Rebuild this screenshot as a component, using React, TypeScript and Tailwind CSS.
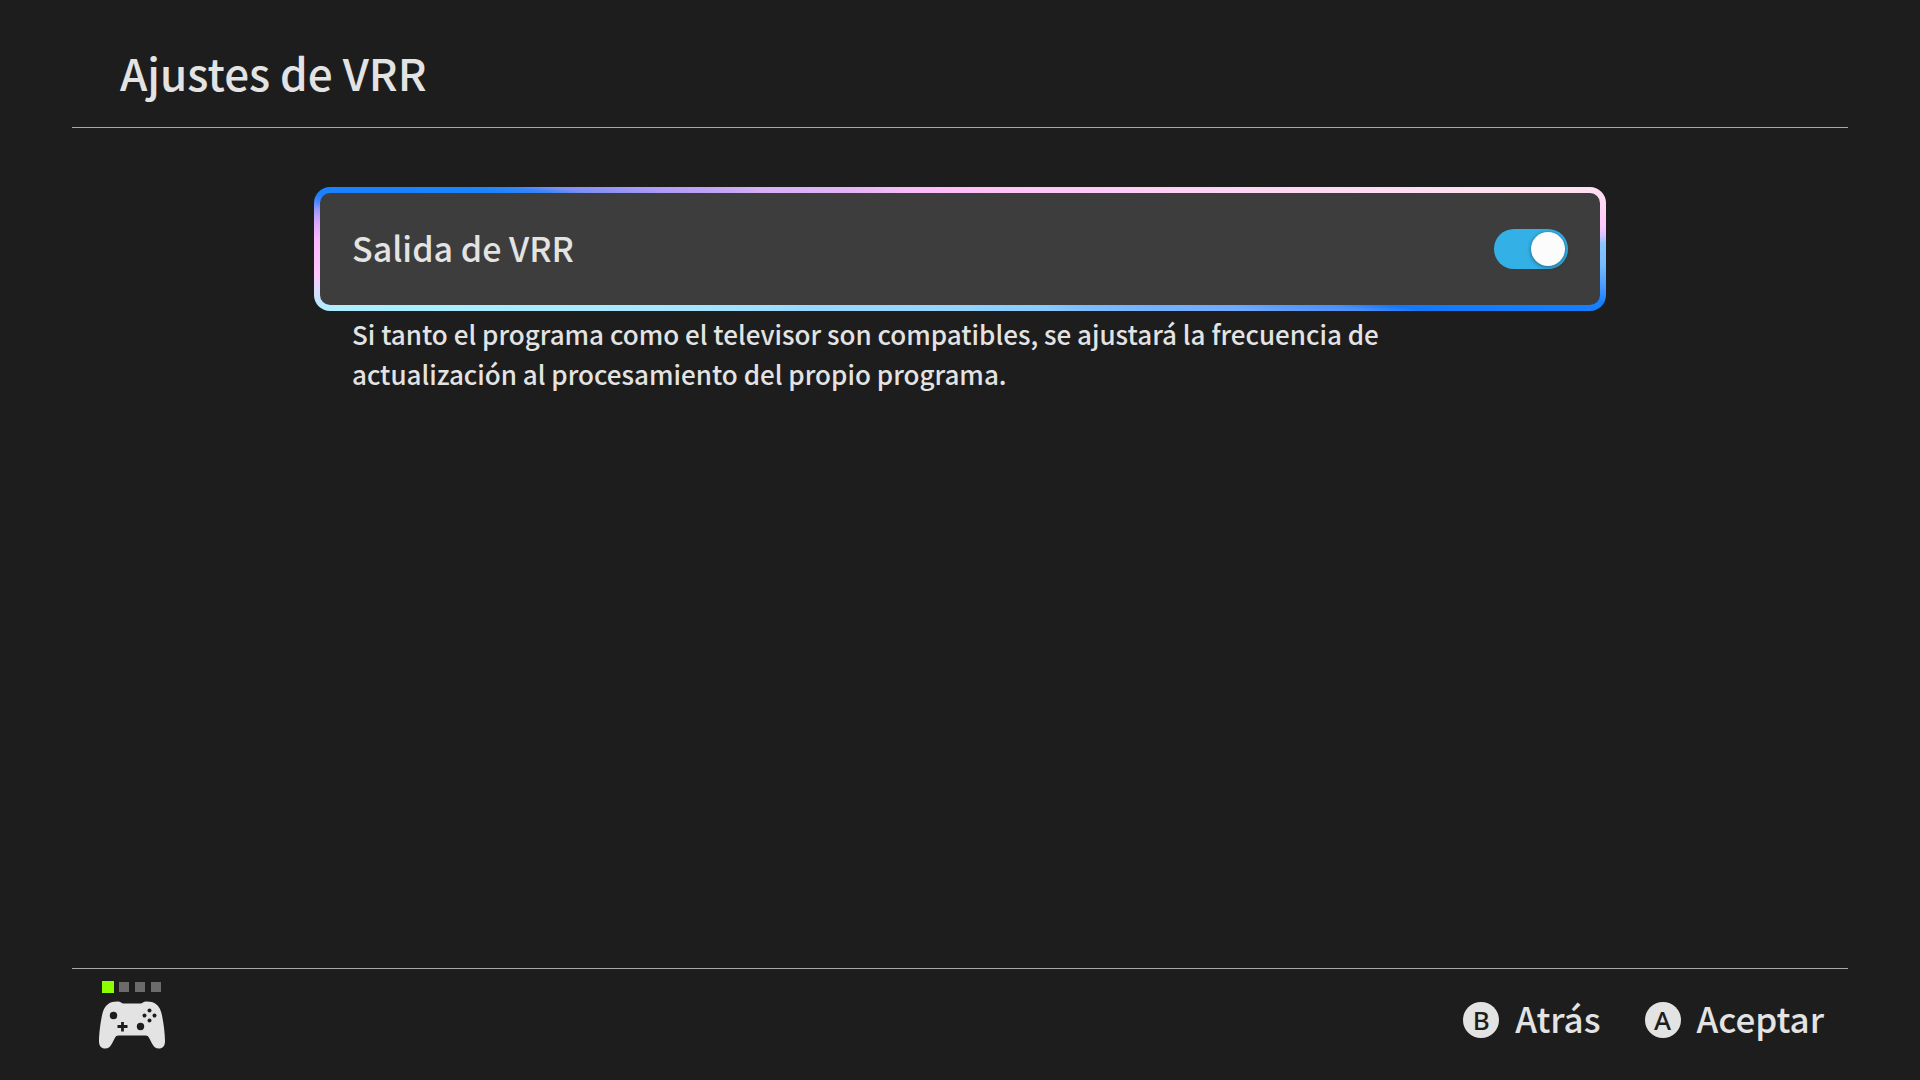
import { useState } from "react";

function PlayerSlots() {
  return (
    <div className="flex h-3 items-center gap-1.5 pl-[3px]">
      <span className="-mr-px size-3 bg-[#8cff00]" />
      <span className="size-2.5 bg-[#6b6b6b]" />
      <span className="size-2.5 bg-[#6b6b6b]" />
      <span className="size-2.5 bg-[#6b6b6b]" />
    </div>
  );
}

function ControllerIcon() {
  return (
    <svg viewBox="0 0 66 48" className="h-12 w-[66px]" aria-hidden="true">
      <path
        fill="#e3e3e3"
        d="M9.500 2.800C12 .8 18.500 0 21 1L24 2.500H42L45 1C47.500 0 54 .8 56.500 2.800C60 5.200 61.800 9 62.800 13.500C64.600 22 66 33 66 40.500C66 45 63.500 47.500 60 47.500C56.500 47.500 54.500 45.500 53 42.500L50 36.800C49.200 35.200 48.200 34.500 46.500 34.500H19.500C17.800 34.500 16.800 35.200 16 36.800L13 42.500C11.500 45.500 9.500 47.500 6 47.500C2.500 47.500 0 45 0 40.500C0 33 1.400 22 3.200 13.500C4.200 9 6 5.200 9.500 2.800Z"
      />
      <g fill="#1d1d1d">
        <circle cx="14.500" cy="14.500" r="3.700" />
        <circle cx="41.500" cy="25.500" r="3.700" />
        <circle cx="50.500" cy="9.500" r="2" />
        <circle cx="50.500" cy="19.500" r="2" />
        <circle cx="45.500" cy="14.500" r="2" />
        <circle cx="55.500" cy="14.500" r="2" />
        <path d="M22.100 21h2.800v3.100h3.600v2.800h-3.600v3.600h-2.800v-3.600h-3.600v-2.800h3.600z" />
      </g>
    </svg>
  );
}

function HintButton({ letter, label }: { letter: string; label: string }) {
  return (
    <button type="button" className="flex items-center gap-4">
      <span className="flex size-9 items-center justify-center rounded-full bg-[#e3e3e3] font-['Noto_Sans',sans-serif] text-[26px] leading-9 text-[#1d1d1d]">
        {letter}
      </span>
      <span className="pb-1">{label}</span>
    </button>
  );
}

function Toggle({
  checked,
  onChange,
}: {
  checked: boolean;
  onChange: (checked: boolean) => void;
}) {
  return (
    <span className="flex">
      <input
        id="vrr-output"
        type="checkbox"
        role="switch"
        checked={checked}
        onChange={(e) => onChange(e.target.checked)}
        aria-describedby="vrr-help"
        className="peer sr-only"
      />
      <span className="flex h-10 w-[74px] items-center rounded-full bg-[#6b6b6b] px-[3px] peer-checked:justify-end peer-checked:bg-[#33b1e6]">
        <span className="size-[34px] rounded-full bg-[#fcfcfc] shadow-[0_1px_4px_rgba(0,0,0,0.45)]" />
      </span>
    </span>
  );
}

export default function App() {
  const [vrr, setVrr] = useState(true);

  return (
    <div className="flex min-h-screen flex-col bg-[#1d1d1d] px-[72px] font-['Noto_Sans_CJK_JP','Noto_Sans',sans-serif] font-medium text-[#e3e3e3]">
      <header className="flex h-32 items-center border-b border-[#a9a9a9] px-12 pt-4">
        <h1 className="text-[44px] leading-[60px]">Ajustes de VRR</h1>
      </header>

      <main className="grow px-[242px] pt-[59px]">
        <div className="rounded-2xl bg-[conic-gradient(#ffbef8_0deg,#ffc8f8_66deg,#ffd6f4_79.7deg,#ffe2f0_84.5deg,#ffc8fc_87.9deg,#d8c4ff_88.8deg,#8cc4ff_89.5deg,#74bcff_91.4deg,#4494ff_93.6deg,#1480ff_94.8deg,#1478fa_97.5deg,#4a90fa_98.6deg,#70aaff_102deg,#88ccff_125deg,#94d4fc_180deg,#98d8ff_249deg,#a8e8ff_260deg,#a8f0ff_264.2deg,#c4e4ff_265.5deg,#dcdcff_266.4deg,#ffc8ff_267.7deg,#fcb8fc_270.8deg,#d8a8fc_272.4deg,#9c98fc_273.5deg,#5888ff_274.1deg,#1a80ff_274.8deg,#1a84ff_277deg,#3a84f8_277.8deg,#7d8ff5_278.6deg,#b09cf5_281deg,#d8b0f5_286.5deg,#f8bcf8_316deg,#ffbef8_360deg)] p-1.5">
          <label
            htmlFor="vrr-output"
            className="flex h-28 items-center justify-between rounded-[10px] bg-[#3d3d3d] px-8 text-[34px]"
          >
            <span className="pb-1">Salida de VRR</span>
            <Toggle checked={vrr} onChange={setVrr} />
          </label>
        </div>
        <p
          id="vrr-help"
          className="pt-[3px] pr-24 pl-[38px] text-[26px] leading-10"
        >
          Si tanto el programa como el televisor son compatibles, se ajustará la
          frecuencia de actualización al procesamiento del propio programa.
        </p>
      </main>

      <footer className="flex h-28 items-start justify-between border-t border-[#a9a9a9] px-6">
        <div className="flex flex-col gap-2 pt-3 pl-[3px]">
          <PlayerSlots />
          <ControllerIcon />
        </div>
        <div className="flex h-[102px] items-center gap-11 text-[35px]">
          <HintButton letter="B" label="Atrás" />
          <HintButton letter="A" label="Aceptar" />
        </div>
      </footer>
    </div>
  );
}
